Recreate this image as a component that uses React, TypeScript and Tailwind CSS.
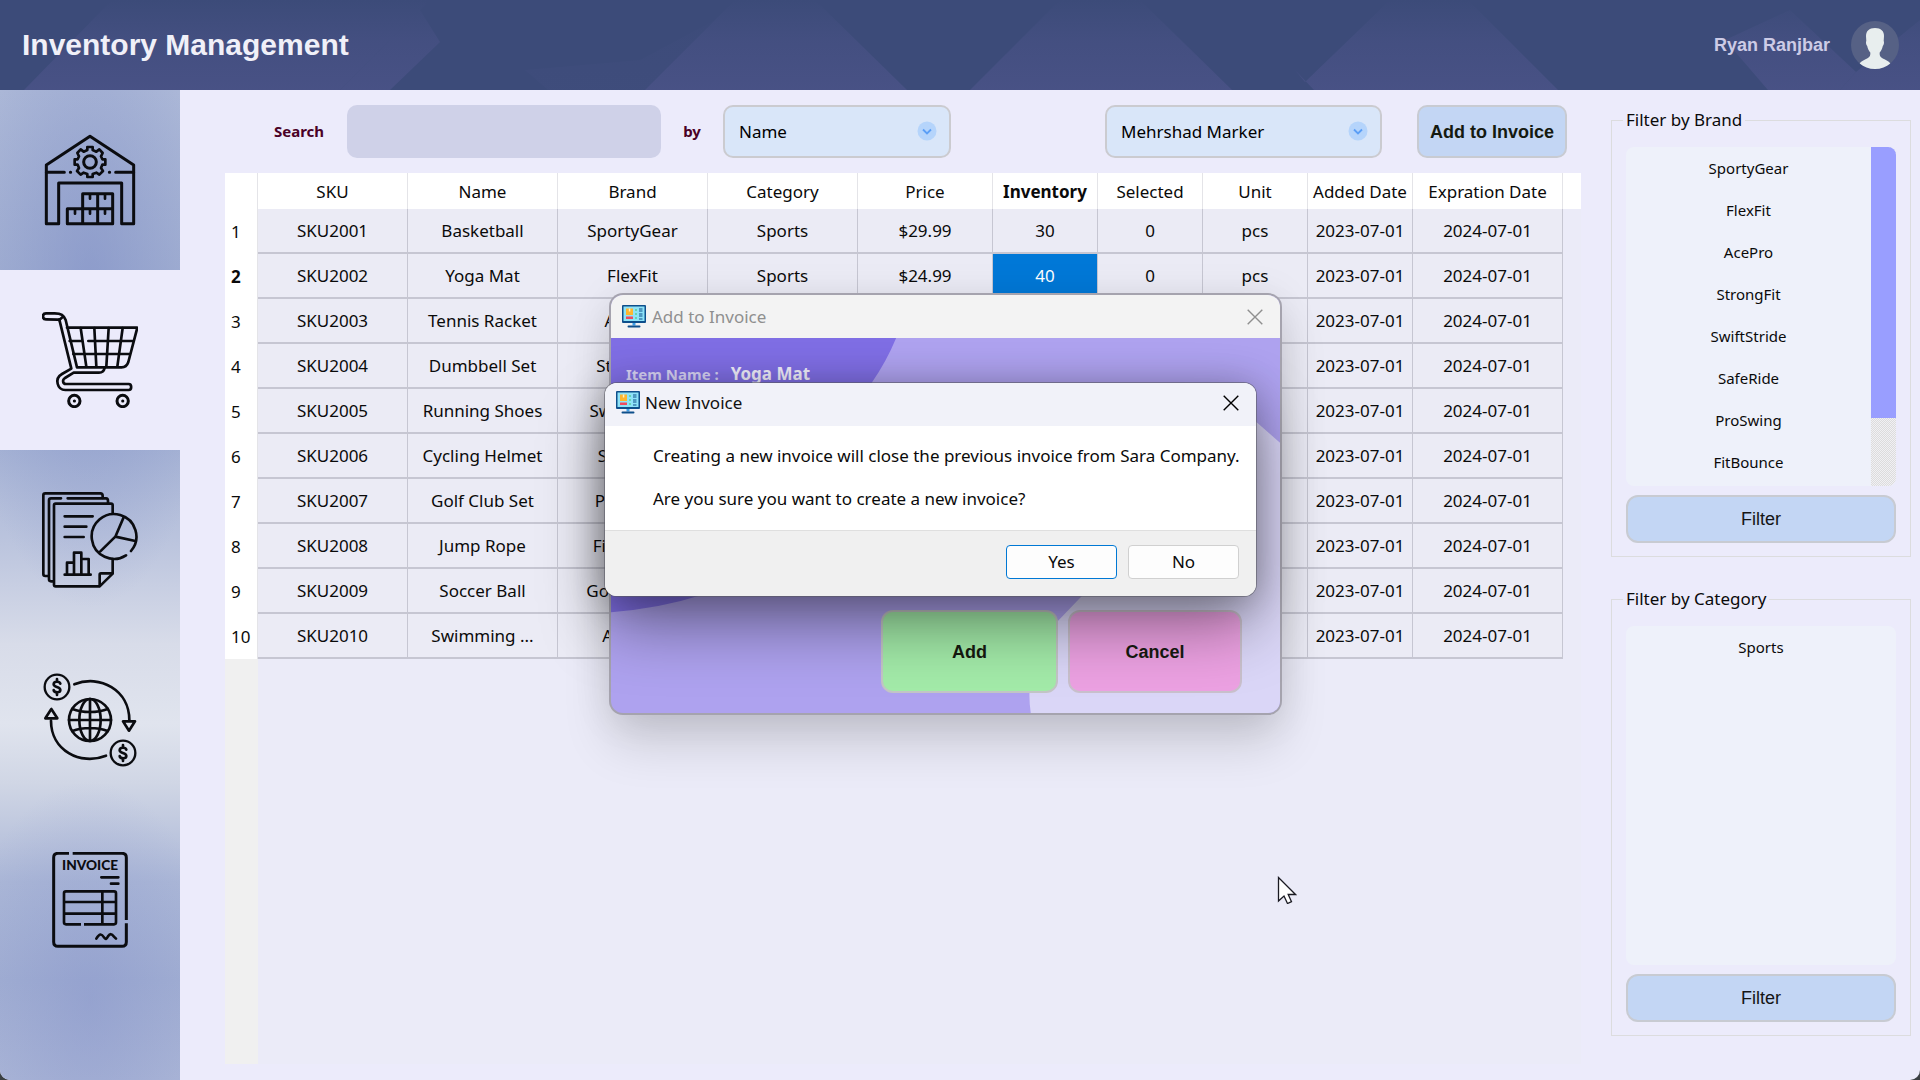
import type { ReactNode } from "react";

type Column = { label: string; width: string; bold?: boolean };

const columns: Column[] = [
  { label: "SKU", width: "w-[150px]" },
  { label: "Name", width: "w-[150px]" },
  { label: "Brand", width: "w-[150px]" },
  { label: "Category", width: "w-[150px]" },
  { label: "Price", width: "w-[135px]" },
  { label: "Inventory", width: "w-[105px]", bold: true },
  { label: "Selected", width: "w-[105px]" },
  { label: "Unit", width: "w-[105px]" },
  { label: "Added Date", width: "w-[105px]" },
  { label: "Expration Date", width: "w-[150px]" },
];

const rows: string[][] = [
  ["SKU2001", "Basketball", "SportyGear", "Sports", "$29.99", "30", "0", "pcs", "2023-07-01", "2024-07-01"],
  ["SKU2002", "Yoga Mat", "FlexFit", "Sports", "$24.99", "40", "0", "pcs", "2023-07-01", "2024-07-01"],
  ["SKU2003", "Tennis Racket", "AcePro", "", "", "", "", "", "2023-07-01", "2024-07-01"],
  ["SKU2004", "Dumbbell Set", "StrongFit", "", "", "", "", "", "2023-07-01", "2024-07-01"],
  ["SKU2005", "Running Shoes", "SwiftStride", "", "", "", "", "", "2023-07-01", "2024-07-01"],
  ["SKU2006", "Cycling Helmet", "SafeRide", "", "", "", "", "", "2023-07-01", "2024-07-01"],
  ["SKU2007", "Golf Club Set", "ProSwing", "", "", "", "", "", "2023-07-01", "2024-07-01"],
  ["SKU2008", "Jump Rope", "FitBounce", "", "", "", "", "", "2023-07-01", "2024-07-01"],
  ["SKU2009", "Soccer Ball", "GoalMaster", "", "", "", "", "", "2023-07-01", "2024-07-01"],
  ["SKU2010", "Swimming ...", "AquaFit", "", "", "", "", "", "2023-07-01", "2024-07-01"],
];

const brands = ["SportyGear", "FlexFit", "AcePro", "StrongFit", "SwiftStride", "SafeRide", "ProSwing", "FitBounce"];

function HeaderBackdrop() {
  return (
    <svg className="absolute inset-0 h-full w-full" viewBox="0 0 1920 90" preserveAspectRatio="none" aria-hidden="true">
      <defs>
        <linearGradient id="facet" x1="0" y1="0" x2="0" y2="90" gradientUnits="userSpaceOnUse">
          <stop offset="0" stopColor="#4b5388" stopOpacity="0" />
          <stop offset="0.45" stopColor="#4b5388" stopOpacity="0.5" />
          <stop offset="1" stopColor="#4b5388" stopOpacity="0.8" />
        </linearGradient>
      </defs>
      <g fill="url(#facet)">
        <path d="M24 90 L112 0 H430 L340 90 Z" />
        <path d="M340 90 L420 10 L440 42 L390 90 Z" />
        <path d="M645 90 L735 0 H815 L907 90 Z" />
        <path d="M525 70 L548 90 H645 L715 20 L640 60 Z" opacity="0.2" />
        <path d="M970 90 L1060 0 H1140 L1232 90 Z" />
        <path d="M1295 70 L1314 90 H1558 L1468 0 H1390 L1305 82 Z" />
        <path d="M1725 40 L1768 90 H1840 L1856 72 L1790 10 Z" />
        <path d="M1840 90 L1856 72 L1920 20 V90 Z" />
      </g>
    </svg>
  );
}

function Avatar() {
  return (
    <svg className="h-12 w-12" viewBox="0 0 48 48" role="img" aria-label="User photo">
      <circle cx="24" cy="24" r="24" fill="#566185" />
      <path
        fill="#e8eeee"
        d="M24 7c-6 0-9 3-9 8l.3 5c-.7.8-.2 4 .9 5 .6 3 1.700 5 3.100 6.500.3 3.500-.8 5-4.300 6.500-2.500 1.200-5 2.500-6.300 4.500C12.600 46 18 48 24 48s11.400-2 15.300-5.500C38 40.500 35.500 39.200 33 38c-3.500-1.500-4.600-3-4.300-6.500 1.400-1.500 2.500-3.500 3.100-6.500 1.100-1 1.600-4.200.9-5l.3-5c0-5-3-8-9-8Z"
      />
    </svg>
  );
}

function NavIcon({ viewBox, children }: { viewBox: string; children: ReactNode }) {
  return (
    <svg
      className="h-24 w-24"
      viewBox={viewBox}
      fill="none"
      stroke="#0b0c10"
      strokeWidth="9"
      strokeLinecap="round"
      strokeLinejoin="round"
      aria-hidden="true"
    >
      {children}
    </svg>
  );
}

function WarehouseIcon() {
  return (
    <NavIcon viewBox="126 126 288 288">
      <path d="M139 401V225L270 139l131 86v176h-36V279H176v122Z" />
      <path d="M139 247h54M347 247h54M211 247h1M328 247h1" />
      <circle cx="270" cy="216" r="19" />
      <path
        d="M262 180 V171 H278 V180 L289 185 L298 178 L308 189 L303 199 L307 208 H316 V224 H307 L303 234 L309 243 L298 254 L289 248 L278 252 V261 H262 V252 L251 248 L242 254 L231 243 L237 234 L233 224 H224 V208 H233 L237 199 L232 189 L242 178 L251 185 Z"
        strokeWidth="8"
      />
      <path d="M202 401v-45h136v45ZM248 356v-45h90v45M248 401v-45M293 401v-90" />
      <path d="M270 314v12M315 314v12M225 359v12M270 359v12M315 359v12" strokeWidth="8" />
    </NavIcon>
  );
}

function CartIcon() {
  return (
    <NavIcon viewBox="126 666 288 288">
      <g strokeWidth="8">
        <path d="M178 689c-8-1-18-1-40-1-12 0-12-18 0-18h26c20 0 27 6 33 20l34 142h134c10 0 17-7 20-16l27-103H201" />
        <path d="M178 689l36 147-28 16c-24 14-14 48 10 48h190c10 0 10-18 0-18H198c-10 0-12-12-3-18l26-16h76c9 0 15-5 17-14" />
        <path d="M178 690l9-8M209 753h36M265 753h132M220 792h168M242 714l17 116M283 714l6 116M326 714l-7 116M368 714l-16 116" />
      </g>
      <circle cx="223" cy="933" r="17" />
      <circle cx="368" cy="933" r="17" />
      <path d="M223 933h.5M368 933h.5" />
    </NavIcon>
  );
}

function ReportIcon() {
  return (
    <NavIcon viewBox="126 126 288 288">
      <g strokeWidth="8">
        <path d="M338 190v-24q0-5-5-5H167q-5 0-5 5v238q0 5 5 5h132l39-38v-44" />
        <path d="M299 408v-34q0-4 4-4h34" />
        <path d="M158 394h-5q-6 0-6-6V151q0-6 6-6h30M203 145h115q6 0 6 8v6" />
        <path d="M144 378h-8q-6 0-6-6V136q0-6 6-6h165q7 0 7 8v6" />
        <path d="M194 199h84M194 230h65M194 261h57" />
        <path d="M194 374h78M201 372v-34h21v34M222 340v-32h22v64M244 327h22v45" />
        <path d="M378 316a67 67 0 1 1 15-13M346 260l25-58M346 260l60 13M346 260l-45 44" />
      </g>
    </NavIcon>
  );
}

function Coin({ x, y }: { x: number; y: number }) {
  return (
    <g strokeWidth="7">
      <circle cx={x} cy={y} r="37" />
      <g transform={`translate(${x} ${y})`} strokeWidth="8">
        <path d="M10 -10 C8 -18 -10 -18 -10 -8 C-10 2 10 -2 10 9 C10 18 -9 18 -10 9 M0 -24 V-16 M0 17 V24" />
      </g>
    </g>
  );
}

function FinanceIcon() {
  return (
    <NavIcon viewBox="126 666 288 288">
      <Coin x={171} y={711} />
      <Coin x={369} y={909} />
      <g strokeWidth="8">
        <path d="M223 703C300 672 388 720 388 810" />
        <path d="M369 814h36l-18 28Z" />
        <path d="M318 917C240 948 153 900 153 812" />
        <path d="M136 805h36l-18-28Z" />
        <circle cx="270" cy="810" r="63" />
        <ellipse cx="270" cy="810" rx="32" ry="63" />
        <path d="M270 747v126M207 810h126M217 777c30 12 76 12 106 0M217 843c30-12 76-12 106 0" />
      </g>
    </NavIcon>
  );
}

function InvoiceIcon() {
  return (
    <NavIcon viewBox="126 216 288 288">
      <path
        d="M218 220h148q13 0 13 13v187M379 430v56q0 13-13 13H174q-13 0-13-13V233q0-13 13-13h33"
        strokeLinecap="butt"
      />
      <path d="M304 292h51M333 311h22" strokeWidth="8" />
      <path
        d="M252 433h90q6 0 6-6v-87q0-6-6-6H198q-6 0-6 6v87q0 6 6 6h45M192 366h156M192 401h156M307 334v99"
        strokeLinecap="butt"
        strokeWidth="8"
      />
      <path d="M289 476c9-15 15-17 23-4 5 8 8 4 12-3 6-9 12-8 17 0l7 7" strokeWidth="8" />
      <text
        x="270"
        y="270"
        textAnchor="middle"
        fontSize="41"
        fontWeight="900"
        fill="#0b0c10"
        stroke="none"
        fontFamily="Lato, sans-serif"
      >
        INVOICE
      </text>
    </NavIcon>
  );
}

function AppIcon() {
  return (
    <svg className="h-6 w-6 shrink-0" viewBox="0 0 24 24" aria-hidden="true">
      <rect x="0" y="0" width="24" height="18" rx="1" fill="#0e4f8b" />
      <rect x="1.500" y="1.500" width="21" height="14.500" fill="#8ee3f8" />
      <rect x="4" y="3.500" width="7" height="6.500" fill="#fdb62f" />
      <rect x="6.800" y="3.500" width="1.500" height="3" fill="#fff0c4" />
      <rect x="4" y="11.500" width="7" height="2.500" fill="#f04a5e" />
      <path d="M13 5h2M13 9h2M13 13h2" stroke="#57cf9a" strokeWidth="1.500" />
      <path d="M17 4h3.500M17 6h3.500M17 9h3.500M17 11h3.500M17 14h3.500" stroke="#0e4f8b" strokeWidth="1" />
      <path d="M10.500 18h3v2.500h-3Z" fill="#3fa0e8" />
      <rect x="5.500" y="20.500" width="13" height="2" rx="1" fill="#0e4f8b" />
    </svg>
  );
}

function CloseButton({ label, tone }: { label: string; tone: string }) {
  return (
    <button type="button" aria-label={label} className={`ml-auto ${tone}`}>
      <svg className="h-4 w-4" viewBox="0 0 16 16" fill="none" stroke="currentColor" strokeWidth="1.400" aria-hidden="true">
        <path d="M.7.7l14.600 14.600M15.300.7.7 15.300" />
      </svg>
    </button>
  );
}

function Picker({ label, value, className }: { label: string; value: string; className: string }) {
  return (
    <div className={`relative h-[53px] ${className}`}>
      <select
        aria-label={label}
        defaultValue={value}
        className="h-full w-full appearance-none rounded-[10px] border-2 border-[#cbcbd0] bg-[#d9e6f9] pl-3.5 text-[17px] text-black"
      >
        <option>{value}</option>
      </select>
      <svg className="pointer-events-none absolute top-4 right-3.5 h-5 w-5" viewBox="0 0 20 20" fill="none" aria-hidden="true">
        <circle cx="10" cy="10" r="9.500" fill="#b5d4fb" />
        <path d="M6 8.500l4 4 4-4" stroke="#5b9ef6" strokeWidth="1.800" />
      </svg>
    </div>
  );
}

function FilterGroup({ title, items, scroll }: { title: string; items: string[]; scroll?: boolean }) {
  return (
    <fieldset className="flex flex-1 flex-col border border-[#dcdcde] px-3.5 pb-[13px]">
      <legend className="-ml-[3px] px-[3px] text-[17px] leading-6">{title}</legend>
      <div className="mt-[15px] flex flex-1 overflow-hidden rounded-lg bg-[#eef1fa]">
        <ul className="flex-1 text-center text-[15px]">
          {items.map((item) => (
            <li key={item} className="h-[42px] leading-[42px]">
              {item}
            </li>
          ))}
        </ul>
        {scroll && (
          <div className="w-[25px] bg-[repeating-conic-gradient(#dcdcdc_0_25%,#f1f0f4_0_50%)] bg-[length:2px_2px]">
            <div className="h-4/5 bg-[#999eff]" />
          </div>
        )}
      </div>
      <button
        type="button"
        className="mt-[9px] h-12 rounded-xl border-2 border-[#c8cbd2] bg-[#c3d6f4] font-['Liberation_Sans',sans-serif] text-lg text-[#151515]"
      >
        Filter
      </button>
    </fieldset>
  );
}

function InventoryTable() {
  return (
    <div className="flex flex-1 flex-col bg-[#ebebf8]">
      <table className="w-full table-fixed border-separate border-spacing-0 text-[17px]">
        <thead>
          <tr className="h-9 bg-white">
            <th className="w-[33px] border-r border-[#e4e4e8]" />
            {columns.map((column) => (
              <th
                key={column.label}
                scope="col"
                className={`border-r border-[#e4e4e8] p-0 pt-0.5 leading-6 whitespace-nowrap ${column.width} ${column.bold ? "font-bold" : "font-normal"}`}
              >
                {column.label}
              </th>
            ))}
            <th />
          </tr>
        </thead>
        <tbody>
          {rows.map((row, r) => (
            <tr key={row[0]} className="h-[45px]">
              <th
                scope="row"
                className={`border-r border-[#e4e4e8] bg-white p-0 pl-1.5 text-left ${r === 1 ? "font-bold" : "font-normal"}`}
              >
                {r + 1}
              </th>
              {row.map((cell, c) => (
                <td
                  key={c}
                  className={`border-r border-b-2 border-[#c6c6d2] p-0 text-center whitespace-nowrap ${r === 1 && c === 5 ? "bg-[#0078d7] text-white" : "bg-[#ebebf5]"}`}
                >
                  {cell}
                </td>
              ))}
              <td />
            </tr>
          ))}
        </tbody>
      </table>
      <div className="w-[33px] flex-1 bg-[#f0f0f0]" />
    </div>
  );
}

function AddToInvoiceDialog() {
  return (
    <section
      role="dialog"
      aria-label="Add to Invoice"
      className="absolute top-[295px] left-[611px] flex h-[418px] w-[669px] flex-col overflow-hidden rounded-xl bg-[#aea2ef] shadow-[0_0_0_2px_#a5a3ae,0_30px_50px_rgba(0,0,0,0.14),0_4px_40px_rgba(0,0,0,0.1)]"
    >
      <div className="flex h-[43px] items-center bg-[#f3f3f3] pr-[17px] pl-[11px]">
        <AppIcon />
        <h2 className="ml-1.5 text-[17px] text-[#8f8f8f]">Add to Invoice</h2>
        <CloseButton label="Close Add to Invoice" tone="text-[#8f8f8f]" />
      </div>
      <div className="relative flex flex-1 flex-col">
        <svg className="absolute inset-0 h-full w-full" viewBox="0 0 671 376" preserveAspectRatio="none" aria-hidden="true">
          <path d="M0 0H286Q276 24 262 44C220 120 180 226 90 258Q50 271 0 275Z" fill="#7f6ee4" />
          <path d="M671 105L647 84L600 50L473 258L448 284C425 312 416 342 421 376H671Z" fill="#dad6f7" />
        </svg>
        <p className="relative mt-[22px] flex items-center gap-3 pl-[15px] font-bold text-[#f1effc]">
          <span className="text-[15px] text-[#d9d4f7]">Item Name :</span>
          <span className="text-[17px] leading-7">Yoga Mat</span>
        </p>
        <div className="relative mt-auto mr-[38px] mb-5 flex justify-end gap-2.5 font-['Liberation_Sans',sans-serif] text-lg font-bold text-[#161a10]">
          <button type="button" className="h-[83px] w-[177px] rounded-xl border-2 border-[#c3c5c6] bg-[#a3eba9]">
            Add
          </button>
          <button type="button" className="h-[83px] w-[174px] rounded-xl border-2 border-[#c9c0cc] bg-[#eca1e2]">
            Cancel
          </button>
        </div>
      </div>
    </section>
  );
}

function NewInvoiceDialog() {
  return (
    <section
      role="alertdialog"
      aria-label="New Invoice"
      className="absolute top-[383px] left-[605px] flex h-[213px] w-[651px] flex-col overflow-hidden rounded-xl bg-white shadow-[0_0_0_1px_rgba(90,90,100,0.6),0_30px_64px_rgba(0,0,0,0.4),0_2px_36px_rgba(0,0,0,0.24)]"
    >
      <div className="flex h-[43px] shrink-0 items-center bg-[#f1f2f9] pr-[17px] pb-1 pl-[11px]">
        <AppIcon />
        <h2 className="ml-[5px] text-[17px] text-[#111]">New Invoice</h2>
        <CloseButton label="Close New Invoice" tone="text-black" />
      </div>
      <div className="flex flex-1 flex-col gap-[19px] pt-[18px] pl-12 text-[17px] leading-6 whitespace-nowrap">
        <p>Creating a new invoice will close the previous invoice from Sara Company.</p>
        <p>Are you sure you want to create a new invoice?</p>
      </div>
      <div className="flex h-[66px] items-center justify-end gap-[11px] border-t border-[#dfdfdf] bg-[#f0f0f0] pr-[17px] pb-1 text-[17px]">
        <button type="button" className="h-[34px] w-[111px] rounded-[4px] border border-[#0078d4] bg-[#fdfdfd] leading-6">
          Yes
        </button>
        <button type="button" className="h-[34px] w-[111px] rounded-[4px] border border-[#d0d0d0] bg-[#fdfdfd] leading-6">
          No
        </button>
      </div>
    </section>
  );
}

const navItems = [
  { label: "Warehouse", icon: <WarehouseIcon /> },
  { label: "Orders", icon: <CartIcon />, active: true },
  { label: "Reports", icon: <ReportIcon /> },
  { label: "Finance", icon: <FinanceIcon /> },
  { label: "Invoices", icon: <InvoiceIcon /> },
];

export default function App() {
  return (
    <div className="bg-[#3a3f42]">
      <div className="relative flex min-h-screen flex-col overflow-hidden rounded-b-[10px] bg-[#ecebfb] font-['Noto_Sans',sans-serif] text-[#0a0a0a]">
        <header className="relative flex h-[90px] items-center justify-between bg-[#3c4b79] pr-[21px] pl-[22px] font-['Liberation_Sans',sans-serif] font-bold">
          <HeaderBackdrop />
          <h1 className="relative text-[30px] leading-9 text-[#f0f0f8]">Inventory Management</h1>
          <div className="relative flex items-center gap-[21px]">
            <span className="text-lg text-[#cdcbe6]">Ryan Ranjbar</span>
            <Avatar />
          </div>
        </header>

        <div className="flex flex-1">
          <nav className="w-[180px] shrink-0 bg-[radial-gradient(ellipse_130px_320px_at_50%_20%,rgba(122,138,196,0.55),transparent),radial-gradient(ellipse_130px_220px_at_50%_92%,rgba(128,142,200,0.4),transparent),linear-gradient(to_bottom,#adb9d8_0%,#a0aed1_25%,#a6b3d5_36%,#bcc5de_46%,#d8dce9_56%,#e0e4ee_64%,#d0d6e5_70%,#abb7d7_80%,#a2afd3_90%,#abb6d7_100%)]">
            {navItems.map((item) => (
              <button
                key={item.label}
                type="button"
                aria-label={item.label}
                className={`flex h-[180px] w-full items-center justify-center ${item.active ? "bg-[#ecebfb]" : ""}`}
              >
                {item.icon}
              </button>
            ))}
          </nav>

          <main className="flex flex-1 flex-col pb-4 pl-[45px]">
            <div className="flex items-center pt-[15px] pr-3.5 pb-[15px] pl-[49px]">
              <label htmlFor="search" className="w-[73px] text-[15px] font-bold text-[#4a0026]">
                Search
              </label>
              <input id="search" type="text" className="h-[53px] w-[314px] rounded-[10px] bg-[#cfd1e8] px-3 text-[17px]" />
              <span className="w-[62px] text-center text-[15px] font-bold text-[#4a0026]">by</span>
              <Picker label="Search field" value="Name" className="w-[228px]" />
              <Picker label="Customer" value="Mehrshad Marker" className="ml-auto w-[277px]" />
              <button
                type="button"
                className="ml-[35px] h-[53px] w-[150px] rounded-[10px] border-2 border-[#c8cbd2] bg-[#c3d6f4] font-['Liberation_Sans',sans-serif] text-lg font-bold whitespace-nowrap text-[#151a10]"
              >
                Add to Invoice
              </button>
            </div>
            <InventoryTable />
          </main>

          <aside className="ml-[30px] flex w-[309px] shrink-0 flex-col gap-[30px] pt-[18px] pr-[9px] pb-11">
            <FilterGroup title="Filter by Brand" items={brands} scroll />
            <FilterGroup title="Filter by Category" items={["Sports"]} />
          </aside>
        </div>

        <AddToInvoiceDialog />
        <NewInvoiceDialog />

        <svg className="pointer-events-none absolute top-[876px] left-[1277px] h-7 w-5" viewBox="0 0 20 28" aria-hidden="true">
          <path d="M1.500 1.500V25l5.500-5 3.500 7.500 4-1.800-3.300-7.200H18.500Z" fill="#fff" stroke="#1a1a22" strokeWidth="1.300" />
        </svg>
      </div>
    </div>
  );
}
